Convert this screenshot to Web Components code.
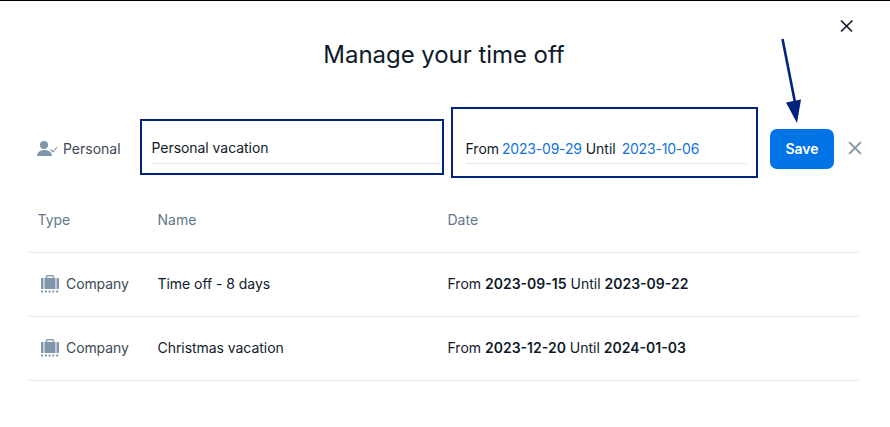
<!DOCTYPE html>
<html lang="en">
<head>
<meta charset="utf-8">
<title>Manage your time off</title>
<style>
html, body { margin: 0; background: #fff; }
body { font-family: Inter, "Liberation Sans", sans-serif; color: #0f1a2a; }
</style>
</head>
<body>
<template id="tpl-dialog">
  <style>
    :host { display: block; position: relative; height: 426px; border-top: 1px solid #000; overflow: hidden; }
    .top { display: flex; justify-content: flex-end; padding: 15px 35px 0 0; height: 20px; }
    h1 { margin: 0; padding: 2px 2px 0 0; height: 60px; font-size: 24px; line-height: 33px; font-weight: 400; text-align: center; color: #0f1a2a; letter-spacing: -.05px; }
    svg.arrow { position: absolute; left: 775px; top: 35px; }
    button { all: unset; display: block; line-height: 0; }
  </style>
  <div class="top"><button aria-label="Close"><svg width="16" height="16" viewBox="0 0 16 16"><path d="M2 2.500l11 11M13.500 2.500l-11.500 11" stroke="#0f1a2a" stroke-width="1.700" fill="none"/></svg></button></div>
  <h1>Manage your time off</h1>
  <slot></slot>
  <svg class="arrow" width="34" height="92" viewBox="0 0 34 92"><path d="M7.500 3l13 66" stroke="#00247d" stroke-width="2.600" fill="none"/><path d="M11 66.500l15-3-4 23.500z" fill="#00247d"/></svg>
</template>

<template id="tpl-edit-row">
  <style>
    :host { display: flex; align-items: flex-start; height: 70px; padding-left: 37px; margin-top: 9px; box-sizing: content-box; font-size: 14px; }
    .type { width: 103px; flex: none; height: 70px; display: flex; align-items: center; gap: 5px; color: #3c4858; padding-top: 13px; box-sizing: border-box; }
    .frame { border: 2.500px solid #00247d; box-sizing: border-box; flex: none; display: flex; flex-direction: column; justify-content: flex-end; }
    .name { width: 304px; height: 56px; margin-top: 12px; padding: 0 1px 9.500px 9.500px; letter-spacing: -.05px; }
    .date { width: 307px; height: 71px; margin-left: 7px; padding: 0 9px 12.500px 12.500px; }
    .field { border-bottom: 1px solid #e4e6e9; height: 32px; line-height: 33px; color: #0f1a2a; white-space: nowrap; }
    .date .field { height: 30px; line-height: 32px; }
    .v { color: #1273de; letter-spacing: -.2px; margin-left: -1px; }
    .sp { margin-left: 2px; }
    .save { all: unset; box-sizing: border-box; width: 64px; height: 40px; margin: 22px 0 0 12px; background: #0073e6; color: #fff; border-radius: 7px; font-weight: 600; text-align: center; line-height: 40px; flex: none; }
    .cancel { all: unset; line-height: 0; margin: 33px 0 0 13px; }
  </style>
  <div class="type">
    <svg width="21" height="18" viewBox="0 0 21 18"><circle cx="7" cy="5" r="4" fill="#8196ad"/><path d="M0 16c0-3.500 3-6 7.500-6S15 12.500 15 16z" fill="#8196ad"/><path d="M13.500 9.500l2.500 2.500 4-5" stroke="#8196ad" stroke-width="1.100" fill="none"/></svg>
    <span>Personal</span>
  </div>
  <div class="frame name"><div class="field">Personal vacation</div></div>
  <div class="frame date"><div class="field">From <span class="v">2023-09-29</span> Until <span class="v sp">2023-10-06</span></div></div>
  <button class="save">Save</button>
  <button class="cancel" aria-label="Discard"><svg width="16" height="16" viewBox="0 0 16 16"><path d="M2 2l12 12M14 2L2 14" stroke="#8d9aa8" stroke-width="1.800" fill="none"/></svg></button>
</template>

<template id="tpl-table">
  <style>
    :host { display: block; margin: 12px 31px 0 28px; font-size: 14px; }
    .head { display: grid; grid-template-columns: 129.500px 290px 1fr; height: 63px; border-bottom: 1px solid #e9ebee; align-items: center; color: #63778c; }
    .head span:first-child { padding-left: 9.500px; }
    .head span { position: relative; top: -1px; }
  </style>
  <div class="head"><span>Type</span><span>Name</span><span>Date</span></div>
  <slot></slot>
</template>

<template id="tpl-row">
  <style>
    :host { display: grid; grid-template-columns: 129.500px 290px 1fr; height: 61px; padding-bottom: 2px; border-bottom: 1px solid #e9ebee; align-items: center; color: #0f1a2a; }
    .type { display: flex; align-items: center; gap: 7px; padding-left: 13px; color: #3c4858; letter-spacing: -.1px; }
    .name { letter-spacing: -.05px; }
    b { font-weight: 600; }
  </style>
  <div class="type">
    <svg width="18" height="18" viewBox="0 0 18 18"><path d="M5.500 3V1.700C5.500 1 6 .6 6.700.6h4.600c.7 0 1.200.4 1.200 1.100V3" stroke="#8196ad" stroke-width="1.300" fill="none"/><path d="M3.500 3h11v11h-11z" fill="#8196ad"/><path d="M0 4c0-.6.4-1 1-1h1.500v11H1c-.6 0-1-.4-1-1zM18 4c0-.6-.4-1-1-1h-1.500v11H17c.6 0 1-.4 1-1z" fill="#8196ad"/><path d="M0 16.500h18" stroke="#8196ad" stroke-width="2" stroke-dasharray="2 1.800" fill="none"/></svg>
    <span>Company</span>
  </div>
  <div class="name"><slot name="name"></slot></div>
  <div>From <b><slot name="from"></slot></b> Until <b><slot name="until"></slot></b></div>
</template>

<manage-dialog>
  <edit-row></edit-row>
  <time-table>
    <time-row><span slot="name">Time off - 8 days</span><span slot="from">2023-09-15</span><span slot="until">2023-09-22</span></time-row>
    <time-row><span slot="name">Christmas vacation</span><span slot="from">2023-12-20</span><span slot="until">2024-01-03</span></time-row>
  </time-table>
</manage-dialog>

<script>
const shadowFrom = (id) => class extends HTMLElement {
  constructor() {
    super();
    this.attachShadow({ mode: "open" }).appendChild(document.getElementById(id).content.cloneNode(true));
  }
};
customElements.define("manage-dialog", shadowFrom("tpl-dialog"));
customElements.define("edit-row", shadowFrom("tpl-edit-row"));
customElements.define("time-table", shadowFrom("tpl-table"));
customElements.define("time-row", shadowFrom("tpl-row"));
</script>
</body>
</html>
